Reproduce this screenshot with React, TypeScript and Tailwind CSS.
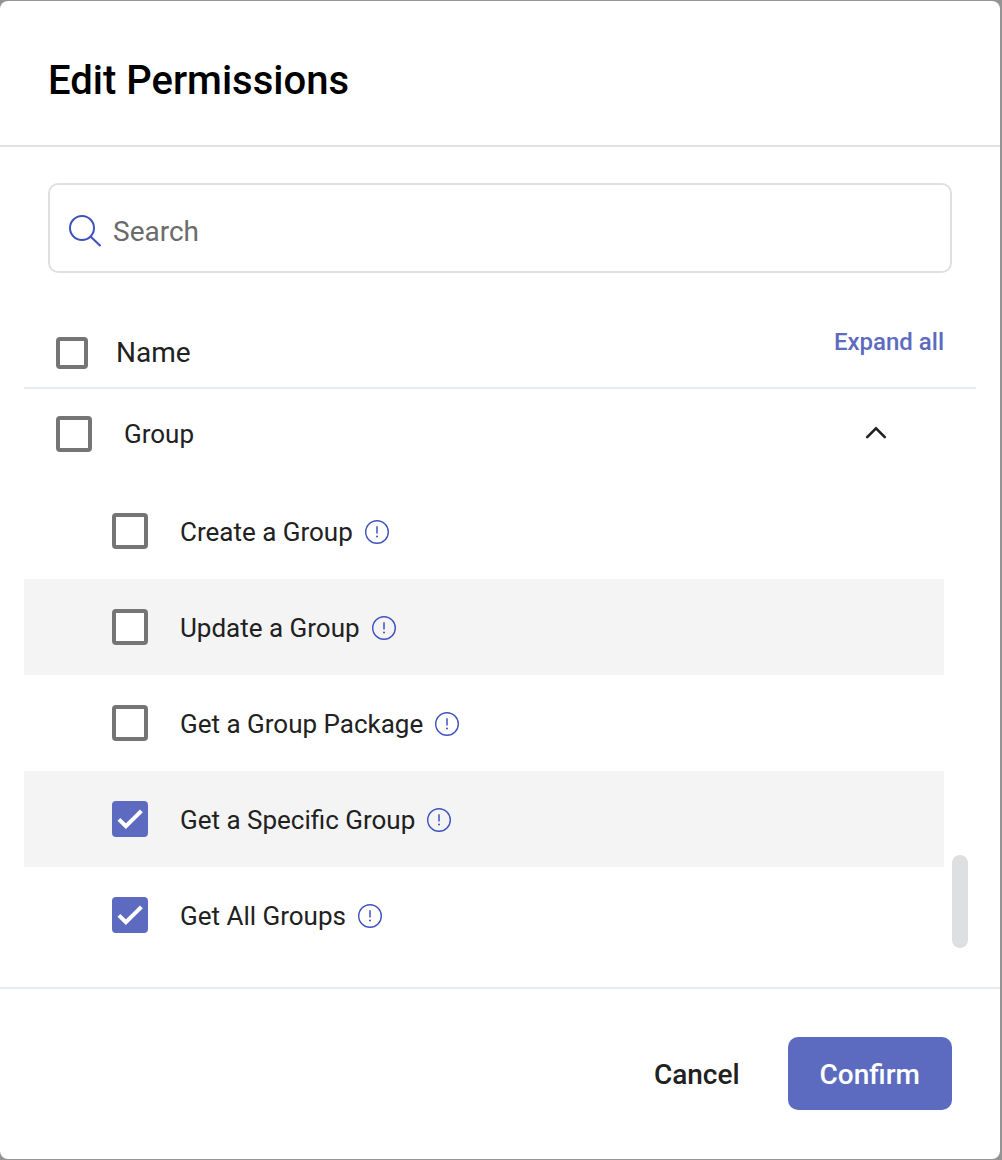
import React, { useState } from 'react';
import clsx from 'clsx';

interface Permission {
  id: string;
  label: string;
  description: string;
}

const PERMISSIONS: Permission[] = [
  { id: 'create', label: 'Create a Group', description: 'Allows creating a new group' },
  { id: 'update', label: 'Update a Group', description: 'Allows changing an existing group' },
  { id: 'package', label: 'Get a Group Package', description: 'Allows reading the package of a group' },
  { id: 'specific', label: 'Get a Specific Group', description: 'Allows reading one group' },
  { id: 'all', label: 'Get All Groups', description: 'Allows listing every group' }
];

interface CheckboxProps {
  id: string;
  checked: boolean;
  onChange: () => void;
  small?: boolean;
}

function Checkbox({ id, checked, onChange, small }: CheckboxProps) {
  return (
    <span className={clsx('grid shrink-0', small ? 'size-8' : 'size-9')}>
      <input
        id={id}
        type="checkbox"
        checked={checked}
        onChange={onChange}
        className="col-start-1 row-start-1 size-full appearance-none rounded-sm border-4 border-[#757575] bg-white checked:border-[#5c6bc0] checked:bg-[#5c6bc0] cursor-pointer"
      />
      {checked && (
        <svg viewBox="0 0 36 36" className="col-start-1 row-start-1 size-full pointer-events-none" aria-hidden="true">
          <path d="M6.9 18.3 13.9 25.2 29.4 9.8" fill="none" stroke="white" strokeWidth="4" />
        </svg>
      )}
    </span>
  );
}

function SearchIcon() {
  return (
    <svg viewBox="0 0 32 32" className="size-8 shrink-0" fill="none" stroke="#3f51bf" strokeWidth="2" aria-hidden="true">
      <circle cx="13" cy="13" r="12" />
      <path d="M21.5 21.5 31.5 31" />
    </svg>
  );
}

function InfoIcon({ title }: { title: string }) {
  return (
    <svg viewBox="0 0 24 24" className="size-6 shrink-0" role="img" aria-label={title}>
      <circle cx="12" cy="12" r="11.3" fill="none" stroke="#3f51bf" strokeWidth="1.4" />
      <path d="M12 6.2v7.4" stroke="#3f51bf" strokeWidth="1.5" />
      <circle cx="12" cy="16.5" r="1" fill="#3f51bf" />
    </svg>
  );
}

export default function App() {
  const [selected, setSelected] = useState<string[]>(['specific', 'all']);
  const [open, setOpen] = useState(true);
  const [query, setQuery] = useState('');

  const allSelected = selected.length === PERMISSIONS.length;
  const visible = PERMISSIONS.filter((p) => p.label.toLowerCase().includes(query.toLowerCase()));

  const toggle = (id: string) =>
    setSelected((prev) => (prev.includes(id) ? prev.filter((p) => p !== id) : [...prev, id]));

  const toggleAll = () => setSelected(allSelected ? [] : PERMISSIONS.map((p) => p.id));

  return (
    <div className="min-h-screen bg-[#949494] py-px pr-0.5 font-[Roboto,sans-serif] text-[#212121]">
      <div role="dialog" aria-labelledby="dialog-title" className="rounded-lg bg-white">
        {/* Header */}
        <header className="border-b-2 border-[#e0e0e6] px-12 pt-14 pb-10">
          <h1 id="dialog-title" className="text-[40px] leading-12 font-medium text-black">
            Edit Permissions
          </h1>
        </header>

        <div className="px-6 pt-9 pb-6">
          {/* Search */}
          <label className="mx-6 flex h-[90px] items-center gap-3 rounded-[10px] border-2 border-[#e0e0e0] px-[19px] pt-1.5">
            <SearchIcon />
            <input
              type="text"
              aria-label="Search"
              placeholder="Search"
              value={query}
              onChange={(e) => setQuery(e.target.value)}
              className="min-w-0 flex-1 pt-0.5 text-[28px] leading-9 outline-none placeholder:text-[#6b6b6b]"
            />
          </label>

          {/* Column header */}
          <div className="mt-[50px] flex items-start justify-between border-b-2 border-[#e8eaf6] pr-8 pb-4 pl-8">
            <div className="flex items-center gap-7 pt-3">
              <Checkbox id="select-all" checked={allSelected} onChange={toggleAll} small />
              <label htmlFor="select-all" className="text-[28px] leading-9">
                Name
              </label>
            </div>
            <button
              type="button"
              onClick={() => setOpen(true)}
              className="pt-[3px] text-2xl leading-8 font-medium text-[#5c6bc0] cursor-pointer"
            >
              Expand all
            </button>
          </div>

          {/* Group list */}
          <div className="relative pr-8">
            <div className="flex h-[94px] items-center justify-between pb-1 pl-8 pr-14">
              <div className="flex items-center gap-8">
                <Checkbox id="group" checked={allSelected} onChange={toggleAll} />
                <label htmlFor="group" className="text-[26px] leading-8">
                  Group
                </label>
              </div>
              <button
                type="button"
                aria-label="Toggle group"
                aria-expanded={open}
                onClick={() => setOpen(!open)}
                className="cursor-pointer"
              >
                <svg viewBox="0 0 24 24" className={clsx('size-6', !open && 'rotate-180')} aria-hidden="true">
                  <path d="M3.2 15.2 12 6.4 20.8 15.2" fill="none" stroke="#212121" strokeWidth="2.6" strokeLinecap="round" />
                </svg>
              </button>
            </div>

            {open && (
              <ul>
                {visible.map((p) => (
                  <li key={p.id} className="flex h-24 items-center pl-[88px] even:bg-[#f4f4f4]">
                    <Checkbox id={p.id} checked={selected.includes(p.id)} onChange={() => toggle(p.id)} />
                    <div className="flex items-center gap-3 pt-0.5 pl-8">
                      <label htmlFor={p.id} className="text-[26px] leading-8">
                        {p.label}
                      </label>
                      <InfoIcon title={p.description} />
                    </div>
                  </li>
                ))}
              </ul>
            )}

            {/* Scroll thumb */}
            <div className="absolute right-2 bottom-[15px] h-[93px] w-4 rounded-full bg-[#dedfe0]" />
          </div>
        </div>

        {/* Footer */}
        <footer className="flex items-center justify-end gap-4 border-t-2 border-[#e8eaf6] px-12 pt-12 pb-[49px]">
          <button type="button" className="h-[73px] rounded-[10px] px-8 pt-0.5 text-[28px] font-medium cursor-pointer">
            Cancel
          </button>
          <button
            type="button"
            className="h-[73px] rounded-[10px] bg-[#5c6bc0] px-8 pt-0.5 text-[28px] font-medium text-white cursor-pointer"
          >
            Confirm
          </button>
        </footer>
      </div>
    </div>
  );
}
